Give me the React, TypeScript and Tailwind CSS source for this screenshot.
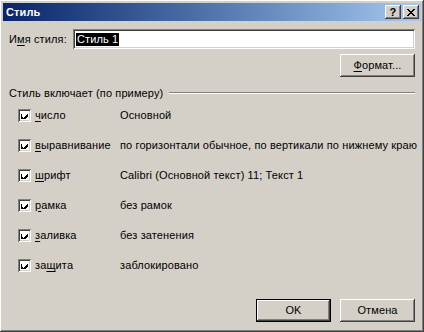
const raised =
  'shadow-[inset_-1px_-1px_#404040,inset_1px_1px_#ffffff,inset_-2px_-2px_#808080,inset_2px_2px_#d4d0c8]'
const sunken =
  'shadow-[inset_1px_1px_#808080,inset_-1px_-1px_#ffffff,inset_2px_2px_#404040,inset_-2px_-2px_#d4d0c8]'

const U = ({ children }: { children: string }) => <span className="underline underline-offset-2">{children}</span>

const rows: { pre: string; acc: string; post: string; value: string }[] = [
  { pre: '', acc: 'ч', post: 'исло', value: 'Основной' },
  { pre: '', acc: 'в', post: 'ыравнивание', value: 'по горизонтали обычное, по вертикали по нижнему краю' },
  { pre: '', acc: 'ш', post: 'рифт', value: 'Calibri (Основной текст) 11; Текст 1' },
  { pre: '', acc: 'р', post: 'амка', value: 'без рамок' },
  { pre: '', acc: 'з', post: 'аливка', value: 'без затенения' },
  { pre: 'за', acc: 'щ', post: 'ита', value: 'заблокировано' },
]

const CheckBox = () => (
  <div className={`w-[13px] h-[13px] shrink-0 bg-white ${sunken} flex items-center justify-center`}>
    <svg width="7" height="7" viewBox="0 0 7 7" shapeRendering="crispEdges">
      <path d="M0 2h1v3h1v1h1v-1h1v-1h1v-1h1v-1h1v3h-1v1h-1v1h-1v1h-1v1h-1v-1h-1v-1h-1z" fill="#000" />
    </svg>
  </div>
)

export default function App() {
  return (
    <div
      className={`w-[424px] h-[332px] bg-[#d4d0c8] p-[3px] flex flex-col text-[11px] tracking-[0.12px] text-black ${raised}`}
      style={{ fontFamily: '"Liberation Sans", Arial, sans-serif' }}
    >
      {/* Title bar */}
      <div className="h-[18px] flex items-center pl-[3px] pr-[2px] bg-gradient-to-r from-[#0a246a] to-[#a6caf0]">
        <span className="font-bold text-white text-[11px] flex-1">Стиль</span>
        <div className={`w-[16px] h-[14px] bg-[#d4d0c8] ${raised} flex items-center justify-center font-bold text-[11px] leading-none`}>?</div>
        <div className={`w-[16px] h-[14px] ml-[2px] bg-[#d4d0c8] ${raised} flex items-center justify-center`}>
          <svg width="8" height="7" viewBox="0 0 8 7" shapeRendering="crispEdges">
            <path d="M0 0h2v1h1v1h2v-1h1v-1h2v1h-1v1h-1v1h-1v1h1v1h1v1h1v1h-2v-1h-1v-1h-2v1h-1v1h-2v-1h1v-1h1v-1h1v-1h-1v-1h-1v-1h-1z" fill="#000" />
          </svg>
        </div>
      </div>

      {/* Style name */}
      <div className="flex items-center mt-[8px] pl-[6px] pr-[6px]">
        <span className="w-[64px] shrink-0">
          И<U>м</U>я стиля:
        </span>
        <div className={`flex-1 h-[20px] bg-white ${sunken} flex items-center pl-[3px]`}>
          <span className="bg-black text-white leading-[13px] px-px">Стиль 1</span>
        </div>
      </div>

      <div className="flex justify-end mt-[5px] pr-[6px]">
        <button className={`w-[75px] h-[23px] ${raised} bg-[#d4d0c8] flex items-center justify-center`}>
          <U>Ф</U>ормат...
        </button>
      </div>

      {/* Group */}
      <div className="flex items-center mt-[8px] pl-[6px] pr-[6px]">
        <span>Стиль включает (по примеру)</span>
        <div className="flex-1 ml-[6px] h-[2px] border-t border-[#808080] bg-white" />
      </div>

      <div className="flex flex-col mt-[7px] pl-[15px] gap-[17px]">
        {rows.map((r) => (
          <div key={r.post} className="flex items-center h-[13px]">
            <CheckBox />
            <span className="w-[89px] shrink-0 pl-[4px]">
              {r.pre}
              <U>{r.acc}</U>
              {r.post}
            </span>
            <span className="whitespace-nowrap">{r.value}</span>
          </div>
        ))}
      </div>

      <div className="flex-1" />

      {/* Buttons */}
      <div className="flex justify-end gap-[9px] pr-[6px] mb-[7px]">
        <button className="w-[75px] h-[23px] border border-black bg-[#d4d0c8] flex items-center justify-center shadow-[inset_-1px_-1px_#404040,inset_1px_1px_#ffffff,inset_-2px_-2px_#808080]">
          OK
        </button>
        <button className={`w-[75px] h-[23px] ${raised} bg-[#d4d0c8] flex items-center justify-center`}>
          Отмена
        </button>
      </div>
    </div>
  )
}
